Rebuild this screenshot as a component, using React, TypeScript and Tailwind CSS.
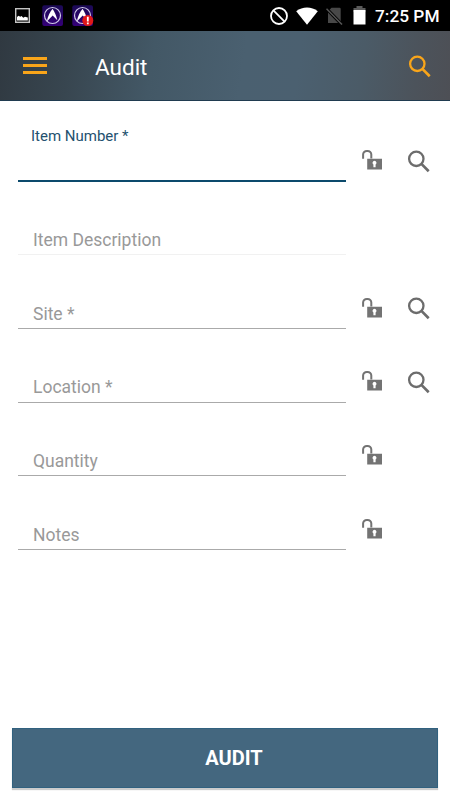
import React from 'react';

type Field = {
  label: string;
  active?: boolean;
  disabled?: boolean;
  lock?: boolean;
  search?: boolean;
};

const fields: Field[] = [
  { label: 'Item Number *', active: true, lock: true, search: true },
  { label: 'Item Description', disabled: true },
  { label: 'Site *', lock: true, search: true },
  { label: 'Location *', lock: true, search: true },
  { label: 'Quantity', lock: true },
  { label: 'Notes', lock: true },
];

const SearchIcon = () => (
  <svg width="24" height="24" viewBox="0 0 24 24" fill="none" stroke="currentColor">
    <circle cx="9.3" cy="8.8" r="7.2" strokeWidth="2.3" />
    <path d="M14.4 13.9l7.3 7.3" strokeWidth="2.7" />
  </svg>
);

const UnlockIcon = () => (
  <svg width="22" height="22" viewBox="0 0 22 22" fill="none">
    <path d="M2.1 9.7V5.6a3.7 3.7 0 0 1 3.7-3.7h.8a3.7 3.7 0 0 1 3.7 3.7v4" stroke="currentColor" strokeWidth="2" />
    <path
      fillRule="evenodd"
      d="M6.2 9.8H21v10.6H6.2zM13.5 11.7a2.1 2.1 0 0 0-1.1 3.8v2.7h2.2v-2.7a2.1 2.1 0 0 0-1.1-3.8z"
      fill="currentColor"
    />
  </svg>
);

const AppBadge = ({ alert = false }: { alert?: boolean }) => (
  <svg width="22" height="22" viewBox="0 0 22 22">
    <defs>
      <linearGradient id="badge" x1="0" y1="0" x2="0" y2="1">
        <stop offset="0" stopColor="#1b0a55" />
        <stop offset="1" stopColor="#350078" />
      </linearGradient>
    </defs>
    <rect x="0.3" y="0.3" width="20.7" height="20.7" rx="2" fill="url(#badge)" />
    <circle cx="10.5" cy="10.5" r="8" fill="none" stroke="#cfcae6" strokeWidth="1.2" />
    <path d="M10.6 3.8C12.5 6.8 14.5 11 15.3 15.3L10.7 10.6 4.8 16.6C5.8 11 8 7 10.6 3.8z" fill="#fff" />
    {alert && (
      <>
        <circle cx="15.8" cy="15.5" r="5.5" fill="#e0181a" />
        <path d="M15.8 11.8v4.6M15.8 17.6v1.6" stroke="#fff" strokeWidth="1.8" />
      </>
    )}
  </svg>
);

const StatusBar = () => (
  <div className="flex h-[31px] items-center bg-black text-white">
    <svg className="ml-[15px]" width="15" height="15" viewBox="0 0 15 15">
      <rect x="0.7" y="0.7" width="13.6" height="13.6" fill="none" stroke="#c4c4c4" strokeWidth="1.4" />
      <path d="M2 12.5V9l1.5-1.3 1.8 1 1.2-.8 1.8 1.8 1.7-.9 2.8.7v3z" fill="#fff" />
    </svg>
    <div className="ml-3 flex gap-2">
      <AppBadge />
      <AppBadge alert />
    </div>
    <svg className="ml-auto" width="18" height="18" viewBox="0 0 18 18" fill="none" stroke="#fff" strokeWidth="1.8">
      <circle cx="9" cy="9" r="8" />
      <path d="m3.4 3.4 11.2 11.2" />
    </svg>
    <svg className="ml-[8.5px]" width="22" height="18" viewBox="0 0 22 18">
      <path d="M11 17.8.2 4.2C6.5-.6 15.5-.6 21.8 4.2z" fill="#fff" />
    </svg>
    <svg className="ml-2" width="17" height="18" viewBox="0 0 17 18">
      <path d="M5.5.8h8A1.2 1.2 0 0 1 14.7 2v14H2V4.3z" fill="#484848" />
      <path d="m0 1.2 15.5 16" stroke="#000" strokeWidth="3.2" />
      <path d="m.5 1.7 15.5 15.8" stroke="#555" strokeWidth="1.5" />
    </svg>
    <svg className="ml-[10px]" width="13" height="19" viewBox="0 0 13 19">
      <path d="M3.5 0h6v2h3v4H.5V2h3z" fill="#5a5a5a" />
      <path d="M.5 4h12v14.5H.5z" fill="#fff" />
    </svg>
    <span className="mr-[10.5px] ml-[9px] pt-[2px] text-[17.3px] leading-none font-medium">7:25 PM</span>
  </div>
);

const FormRow = ({ label, active, disabled, lock, search }: Field) => (
  <div className="flex h-[73.65px] items-end">
    <div
      className={
        active
          ? 'h-[56px] w-[328px] border-b-2 border-[#0c4a6c] text-[#24516f]'
          : disabled
            ? 'flex h-[34px] w-[328px] items-end border-b border-[#f1f1f1] text-[#999]'
            : 'flex h-[34px] w-[328px] items-end border-b border-[#aaa] text-[#999]'
      }
    >
      {active ? (
        <label className="ml-[13px] block pt-px text-[15px] leading-[18px]">{label}</label>
      ) : (
        <label className="ml-[15px] pb-[4.3px] text-[17.5px] leading-5">{label}</label>
      )}
    </div>
    <div className="ml-[15px] flex w-[45.5px] pb-[10.2px] text-[#737373]">{lock && <UnlockIcon />}</div>
    <div className="pb-2 text-[#6c6c6c]">{search && <SearchIcon />}</div>
  </div>
);

const App: React.FC = () => {
  return (
    <div className="flex h-[800px] w-[450px] flex-col bg-white font-['Roboto',sans-serif]">
      <StatusBar />

      {/* Toolbar */}
      <header className="flex h-[70px] items-center border-b border-[#203b50] bg-[linear-gradient(98deg,#303941_0%,#384650_16%,#435866_34%,#4a6070_54%,#4b6070_66%,#4b5b67_80%,#4c535b_92%,#4d4f55_100%)]">
        <div className="ml-[23px] flex w-6 flex-col gap-1">
          <span className="h-[3px] bg-[#f9a51a]" />
          <span className="h-[3px] bg-[#f9a51a]" />
          <span className="h-[3px] bg-[#f9a51a]" />
        </div>
        <h1 className="ml-12 pt-[2px] text-[22.5px] leading-7 text-white">Audit</h1>
        <div className="mr-[18.5px] ml-auto pt-[2px] text-[#f9a51a]">
          <SearchIcon />
        </div>
      </header>

      <main className="flex flex-col pt-[7px] pl-[18px]">
        {fields.map((field) => (
          <FormRow key={field.label} {...field} />
        ))}
      </main>

      <button className="mx-3 mt-auto mb-[12px] h-[60px] border border-[#31617f] bg-[#44677f] pb-px pl-[18px] text-[20px] font-bold text-white shadow-[0_2px_1px_0px_#ccc]">
        AUDIT
      </button>
    </div>
  );
};

export default App;
